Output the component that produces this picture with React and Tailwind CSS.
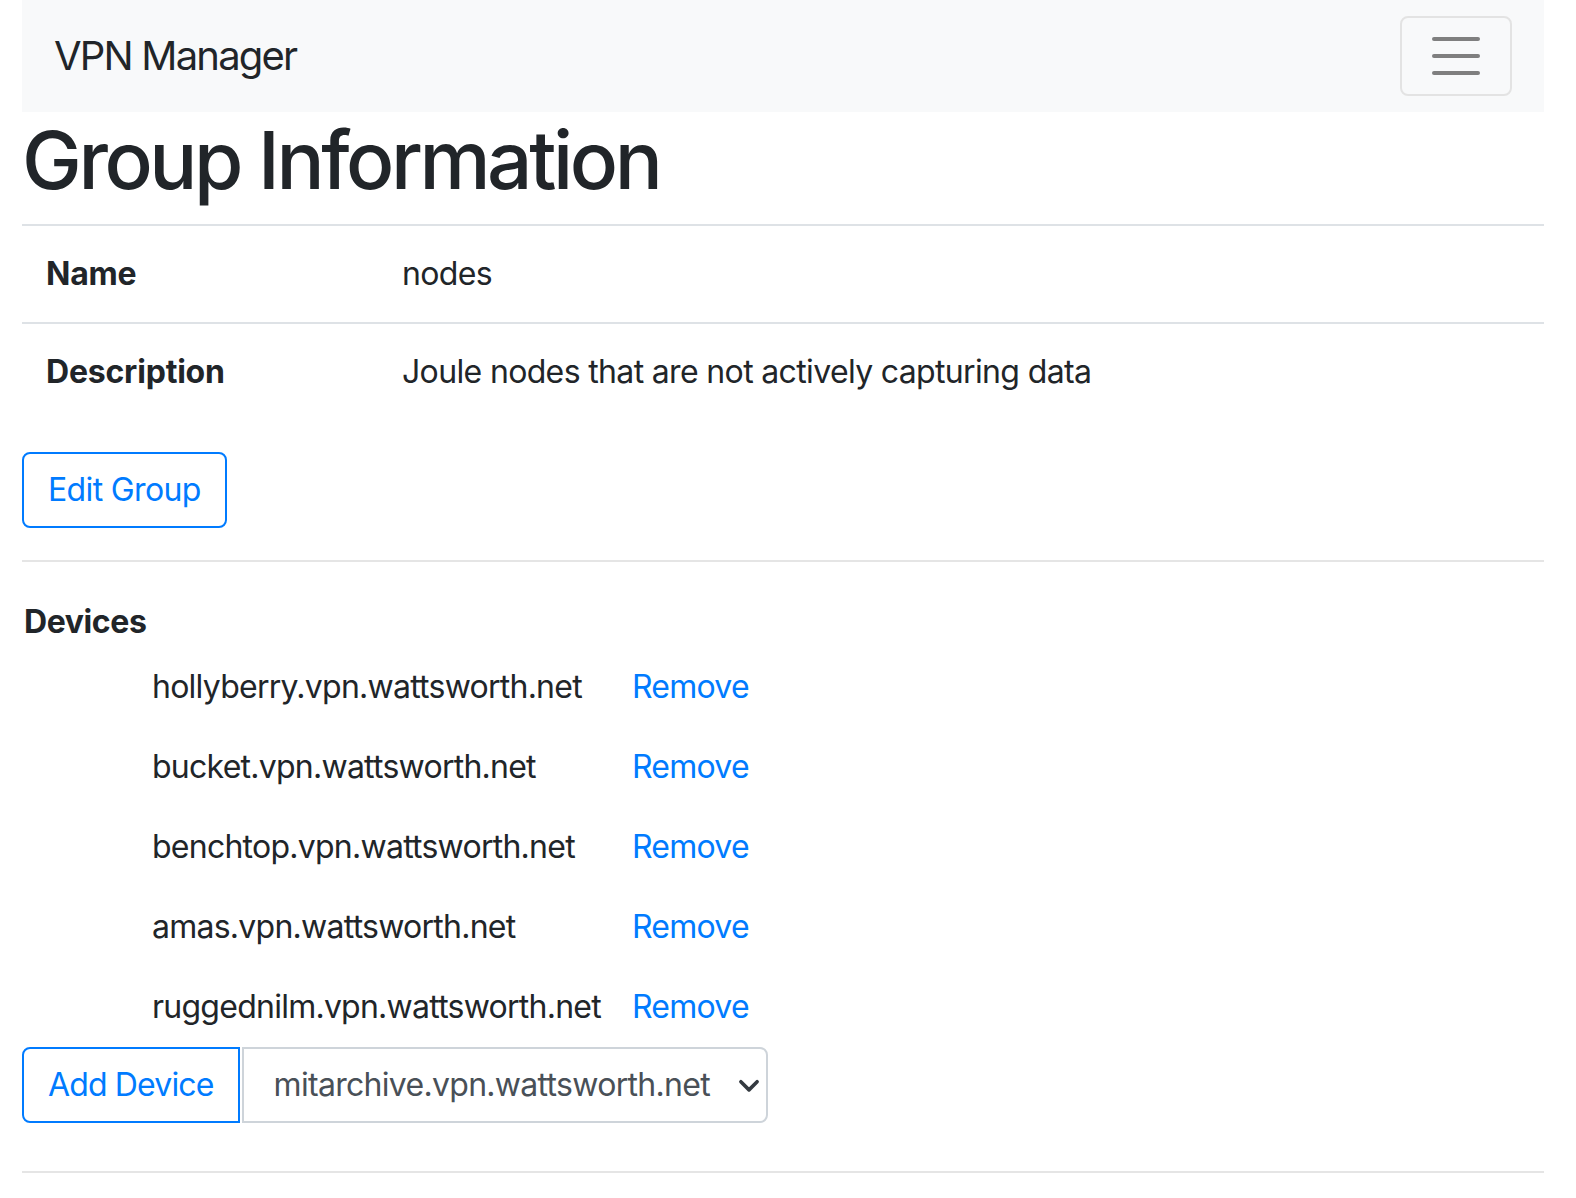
const devices = [
  "hollyberry.vpn.wattsworth.net",
  "bucket.vpn.wattsworth.net",
  "benchtop.vpn.wattsworth.net",
  "amas.vpn.wattsworth.net",
  "ruggednilm.vpn.wattsworth.net",
];

const App = () => {
  return (
    <div className="min-h-screen bg-white font-['Inter',sans-serif] text-[#212529]">
      <div className="ml-[22px] w-[1522px]">
        {/* navbar */}
        <nav className="flex h-[112px] items-center justify-between bg-[#f8f9fa] px-[32px]">
          <span className="text-[40px] leading-[60px] tracking-[-1.8px]">VPN Manager</span>
          <button className="flex h-[80px] w-[112px] flex-col items-center justify-center gap-[13px] rounded-[8px] border-2 border-[#e3e3e3]">
            <span className="block h-[4px] w-[48px] rounded-full bg-[#7f7f7f]" />
            <span className="block h-[4px] w-[48px] rounded-full bg-[#7f7f7f]" />
            <span className="block h-[4px] w-[48px] rounded-full bg-[#7f7f7f]" />
          </button>
        </nav>

        <h1 className="mb-[16px] text-[80px] font-medium leading-[96px] tracking-[-3.4px]">Group Information</h1>

        {/* group details */}
        <div className="mb-[32px] text-[32px] leading-[48px] tracking-[-0.65px]">
          <div className="flex border-t-2 border-[#dee2e6] p-[24px]">
            <div className="w-[356px] font-bold tracking-[-0.2px]">Name</div>
            <div>nodes</div>
          </div>
          <div className="flex border-t-2 border-[#dee2e6] p-[24px]">
            <div className="w-[356px] font-bold tracking-[-0.2px]">Description</div>
            <div>Joule nodes that are not actively capturing data</div>
          </div>
        </div>

        <button className="h-[76px] whitespace-nowrap rounded-[8px] border-2 border-[#007bff] px-[24px] text-[32px] tracking-[-0.65px] text-[#007bff]">
          Edit Group
        </button>

        <hr className="my-[32px] border-t-2 border-[#e5e5e5]" />

        {/* devices */}
        <div className="pt-[4px] pl-[2px] text-[32px] font-bold leading-[48px] tracking-[-0.4px]">Devices</div>
        <div className="mt-[1px] grid w-fit grid-cols-[auto_auto] gap-x-[31px] pl-[130px] text-[32px] leading-[48px] tracking-[-0.75px]">
          {devices.map((d) => (
            <div key={d} className="contents">
              <div className="py-[16px]">{d}</div>
              <div className="py-[16px] text-[#007bff]">Remove</div>
            </div>
          ))}
        </div>

        <div className="flex h-[76px] w-[746px]">
          <button className="whitespace-nowrap rounded-l-[8px] border-2 border-[#007bff] px-[24px] text-[32px] tracking-[-0.85px] text-[#007bff]">
            Add Device
          </button>
          <div className="ml-[2px] flex flex-1 items-center justify-between rounded-r-[8px] border-2 border-[#ced4da] pl-[30px] pr-[4px] text-[32px] tracking-[-0.7px] text-[#495057]">
            <span className="whitespace-nowrap">mitarchive.vpn.wattsworth.net</span>
            <svg width="26" height="26" viewBox="0 0 16 16" fill="none" stroke="#343a40" strokeWidth="2.2" strokeLinecap="round" strokeLinejoin="round">
              <path d="M3 6l5 5 5-5" />
            </svg>
          </div>
        </div>

        <hr className="mt-[48px] border-t-2 border-[#e5e5e5]" />
      </div>
    </div>
  );
};

export default App;
